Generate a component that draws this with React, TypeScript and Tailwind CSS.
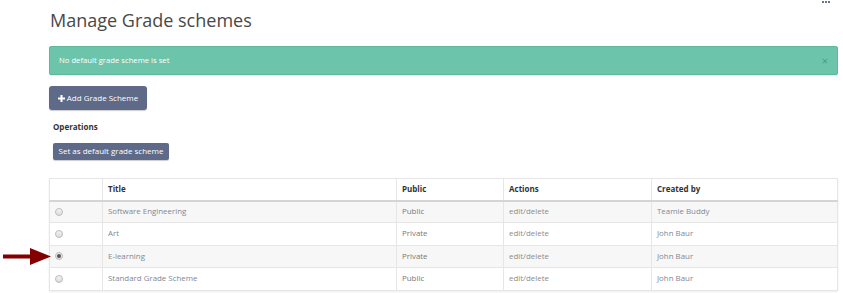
import React from 'react';

const rows = [
  { title: 'Software Engineering', pub: 'Public', by: 'Teamie Buddy', checked: false },
  { title: 'Art', pub: 'Private', by: 'John Baur', checked: false },
  { title: 'E-learning', pub: 'Private', by: 'John Baur', checked: true },
  { title: 'Standard Grade Scheme', pub: 'Public', by: 'John Baur', checked: false },
];

function Radio({ checked }: { checked: boolean }) {
  return (
    <span className="inline-flex h-[8px] w-[8px] items-center justify-center rounded-full border border-[#bdbdbd] bg-gradient-to-b from-[#f4f4f4] to-[#dcdcdc]">
      {checked && <span className="h-[4px] w-[4px] rounded-full bg-[#555]" />}
    </span>
  );
}

export default function App() {
  return (
    <div className="relative h-[293px] w-[843px] overflow-hidden bg-white font-['Open_Sans',sans-serif] text-[#555]">
      {/* top right menu dots */}
      <div className="absolute right-[13px] top-[1px] flex gap-[1px]">
        {[0, 1, 2].map((i) => (
          <span key={i} className="h-[2px] w-[2px] bg-[#6a7590]" />
        ))}
      </div>

      <div className="pl-[49px] pr-[5px] pt-[6px]">
        <h1 className="pl-[1px] text-[18px] font-normal leading-[28px] text-[#484848]">Manage Grade schemes</h1>

        <div className="mt-[12px] flex h-[29px] items-center justify-between rounded-[2px] border border-[#5fb89d] bg-[#6cc4ab] pl-[9px] pr-[9px] shadow-[0_1px_1px_rgba(0,0,0,0.08)]">
          <span className="text-[7.7px] text-white">No default grade scheme is set</span>
          <span className="text-[11px] leading-none text-[#4d9a85]">×</span>
        </div>

        <button className="mt-[11px] flex h-[24px] w-[98px] items-center justify-center gap-[2px] rounded-[3px] bg-[#5e6a88] text-[8px] text-white shadow-[0_1px_1px_rgba(0,0,0,0.2)]">
          <svg width="7" height="7" viewBox="0 0 7 7">
            <path d="M2.5 0h2v2.5H7v2H4.5V7h-2V4.5H0v-2h2.5z" fill="#fff" />
          </svg>
          Add Grade Scheme
        </button>

        <div className="mt-[11px] pl-[4px] text-[8px] font-bold leading-[12px] text-[#333]">Operations</div>

        <div className="mt-[3px] pl-[4px]">
          <button className="h-[17px] w-[116px] rounded-[2px] bg-[#5e6a88] text-[8px] text-white shadow-[0_1px_1px_rgba(0,0,0,0.2)]">
            Set as default grade scheme
          </button>
        </div>

        <table className="mt-[18px] w-[789px] border-collapse border border-[#e6e6e6] text-left shadow-[0_1px_2px_rgba(0,0,0,0.08)]">
          <thead>
            <tr className="h-[22px] border-b-2 border-[#d4d4d4] text-[8px]">
              <th className="w-[53px] border-r border-[#e6e6e6]" />
              <th className="w-[294px] border-r border-[#e6e6e6] pl-[5px] font-bold text-[#333]">Title</th>
              <th className="w-[107px] border-r border-[#e6e6e6] pl-[5px] font-bold text-[#333]">Public</th>
              <th className="w-[148px] border-r border-[#e6e6e6] pl-[5px] font-bold text-[#333]">Actions</th>
              <th className="pl-[5px] font-bold text-[#333]">Created by</th>
            </tr>
          </thead>
          <tbody className="text-[7.9px]">
            {rows.map((r, i) => (
              <tr key={r.title} className={`h-[22.4px] border-b border-[#e6e6e6] ${i % 2 === 0 ? 'bg-[#f7f7f7]' : 'bg-white'}`}>
                <td className="border-r border-[#e6e6e6] pl-[5px] align-middle">
                  <span className="flex items-center">
                    <Radio checked={r.checked} />
                  </span>
                </td>
                <td className="border-r border-[#e6e6e6] pl-[5px] text-[#828796]">{r.title}</td>
                <td className="border-r border-[#e6e6e6] pl-[5px] text-[#777]">{r.pub}</td>
                <td className="border-r border-[#e6e6e6] pl-[5px] text-[#8c8c8c]">edit/delete</td>
                <td className="pl-[5px] text-[#828796]">{r.by}</td>
              </tr>
            ))}
          </tbody>
        </table>
      </div>

      {/* pointer arrow */}
      <svg className="absolute left-[3px] top-[248px]" width="48" height="17" viewBox="0 0 48 17">
        <path d="M0 6.5h27V0l21 8.5L27 17v-6.5H0z" fill="#820000" />
      </svg>
    </div>
  );
}
